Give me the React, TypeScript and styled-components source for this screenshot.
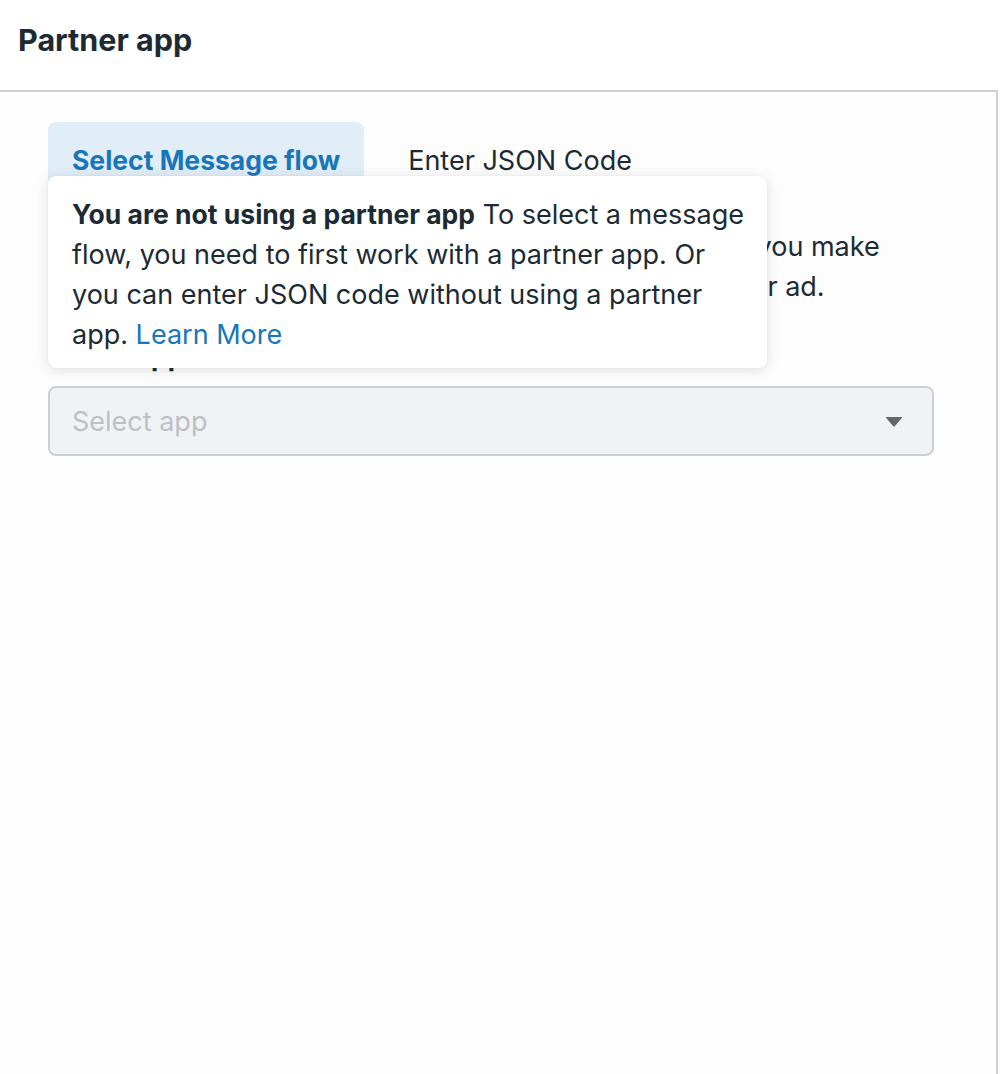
import React from "react";
import styled, { createGlobalStyle } from "styled-components";

const Global = createGlobalStyle`
  html, body { margin: 0; padding: 0; background: #ffffff; }
  body { font-family: Inter, "Noto Sans", Roboto, sans-serif; color: #1c2b33; }
  * { box-sizing: border-box; }
`;

const Page = styled.div`
  width: 1002px;
  min-height: 1074px;
  display: flex;
  flex-direction: column;
`;

const Header = styled.header`
  height: 92px;
  padding: 0 18px 12px;
  display: flex;
  align-items: center;
  border-bottom: 2px solid #cdd1d6;
  width: 998px;
`;

const Title = styled.h1`
  margin: 0;
  font-size: 30.5px;
  font-weight: 700;
  color: #1c2b33;
`;

const Panel = styled.main`
  position: relative;
  flex: 1;
  width: 998px;
  border-right: 2px solid #cdd1d6;
  background: #fdfdfd;
  padding: 30px 62px 0 48px;
  display: flex;
  flex-direction: column;
`;

const Tabs = styled.div`
  display: flex;
  gap: 20px;
`;

const Tab = styled.div<{ $active?: boolean }>`
  height: 76px;
  padding: 0 24px 0;
  border-radius: 8px;
  display: flex;
  align-items: center;
  font-size: ${(p) => (p.$active ? "26.5px" : "27px")};
  font-weight: ${(p) => (p.$active ? 700 : 400)};
  color: ${(p) => (p.$active ? "#1876b9" : "#1c2b33")};
  background: ${(p) => (p.$active ? "#e1edf7" : "transparent")};
`;

const Description = styled.div`
  margin-top: 29px;
  font-size: 27px;
  line-height: 40px;
  color: #1c2b33;
`;

const Line = styled.div`
  white-space: nowrap;
`;

const Label = styled.div`
  margin-top: 33px;
  font-size: 26.5px;
  font-weight: 700;
  line-height: 32px;
  color: #1c2b33;
`;

const SelectBox = styled.div`
  margin-top: 14px;
  height: 70px;
  border: 2px solid #ccd0d5;
  border-radius: 8px;
  background: #f1f2f5;
  display: flex;
  align-items: center;
  justify-content: space-between;
  padding: 0 29px 0 22px;
  font-size: 27px;
  color: #bcc0c4;
`;

const Caret = styled.svg`
  width: 18px;
  height: 11px;
  display: block;
`;

const Popover = styled.div`
  position: absolute;
  left: 48px;
  top: 84px;
  width: 719px;
  padding: 18px 20px 13px 24px;
  background: #ffffff;
  border-radius: 8px;
  box-shadow: 0 2px 14px rgba(0, 0, 0, 0.12), 0 0 2px rgba(0, 0, 0, 0.06);
  font-size: 27px;
  line-height: 40px;
  color: #1c2b33;
`;

const Strong = styled.strong`
  font-weight: 700;
  font-size: 26.5px;
`;

const Link = styled.a`
  color: #1876b9;
  text-decoration: none;
`;

export default function App() {
  return (
    <Page>
      <Global />
      <Header>
        <Title>Partner app</Title>
      </Header>
      <Panel>
        <Tabs>
          <Tab $active>Select Message flow</Tab>
          <Tab>Enter JSON Code</Tab>
        </Tabs>
        <Description>
          <Line>Choose the partner app with your message flow. When you make</Line>
          <Line>changes on the partner app, they will be reflected in your ad.</Line>
        </Description>
        <Label>Select app</Label>
        <SelectBox>
          <span>Select app</span>
          <Caret viewBox="0 0 18 11">
            <path d="M1.5 1 L16.5 1 Q17.5 1 16.8 2 L10 10 Q9 11 8 10 L1.2 2 Q0.5 1 1.5 1 Z" fill="#65676b" />
          </Caret>
        </SelectBox>
        <Popover>
          <Strong>You are not using a partner app</Strong> To select a message flow, you need to
          first work with a partner app. Or you can enter JSON code without using a partner app.{" "}
          <Link href="#">Learn More</Link>
        </Popover>
      </Panel>
    </Page>
  );
}
